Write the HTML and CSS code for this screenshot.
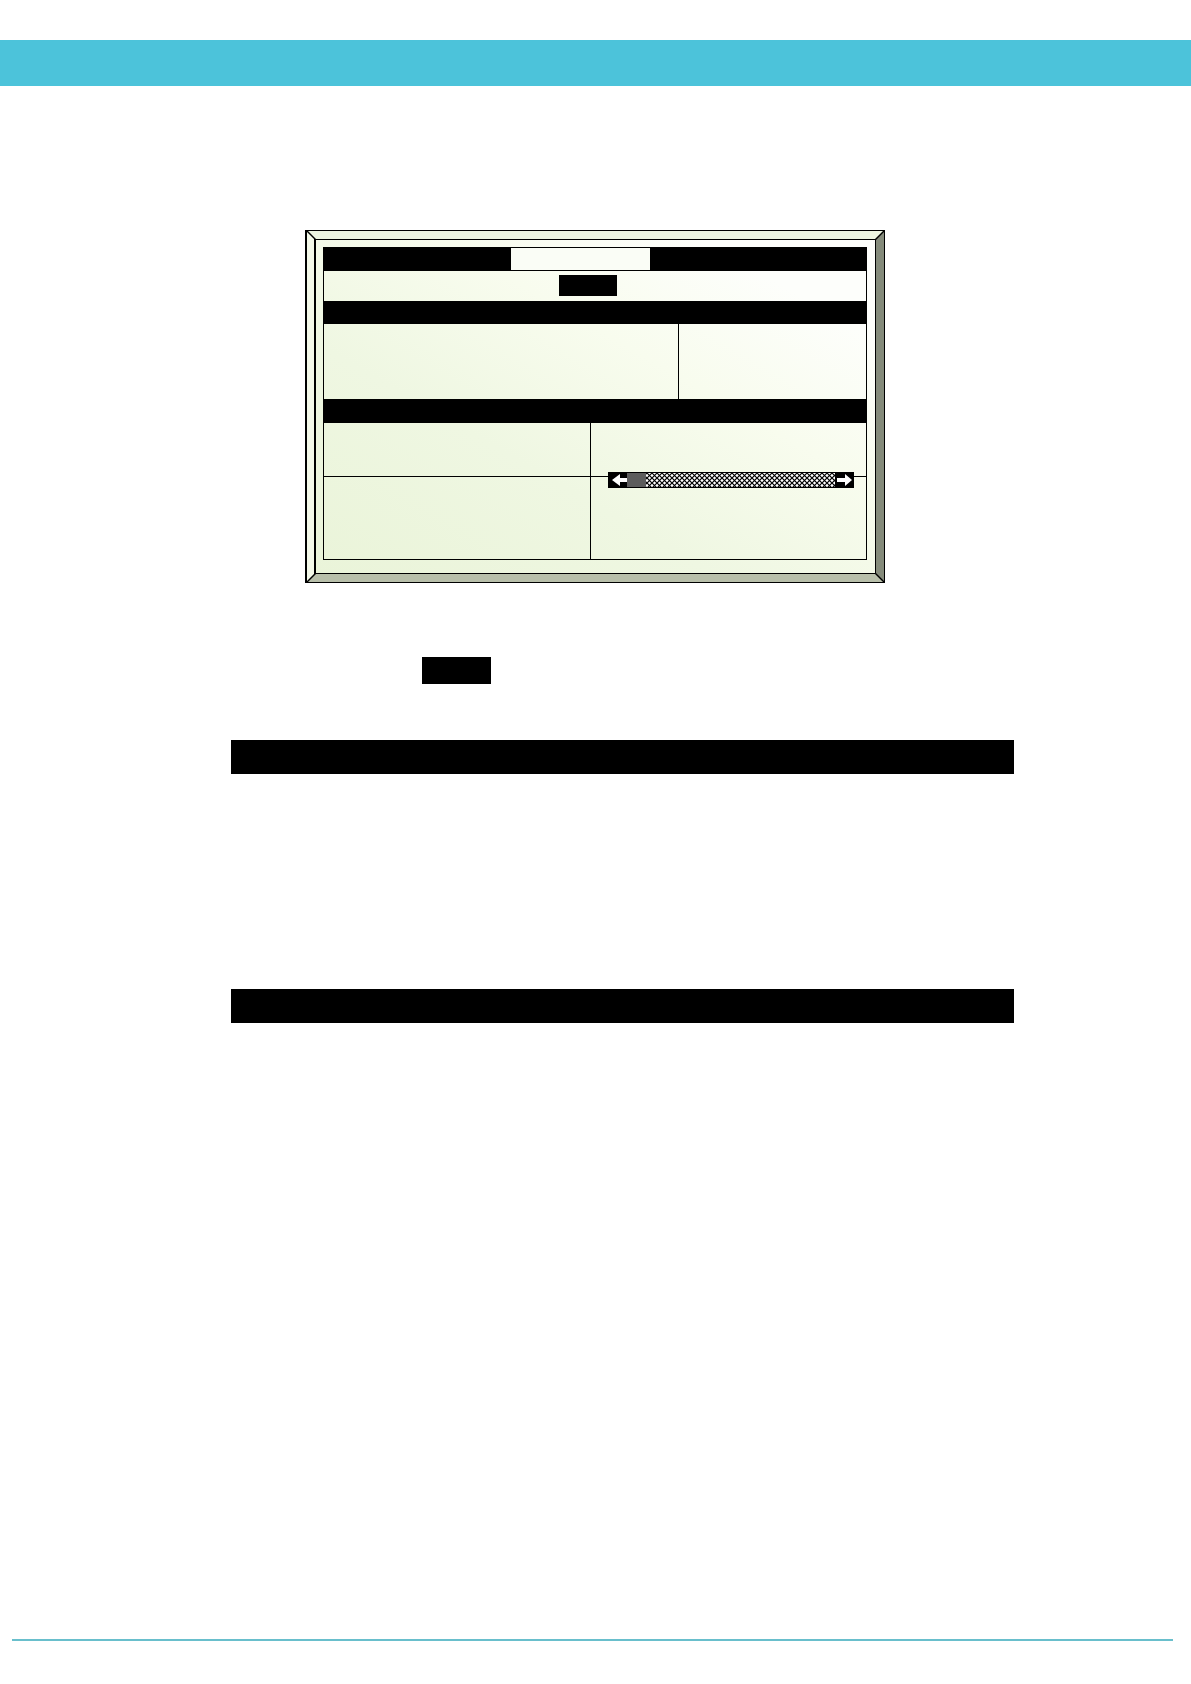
FILE: index.html
```html
<!DOCTYPE html>
<html lang="en">
<head>
<meta charset="utf-8">
<meta name="viewport" content="width=device-width, initial-scale=1">
<title>Display panel</title>
<link rel="stylesheet" href="styles.css">
</head>
<body>
<header class="band"></header>
<main>
  <section class="device">
    <svg class="corner top left" viewBox="0 0 10 10"><path d="M0 0L10 10"/></svg>
    <svg class="corner top right" viewBox="0 0 10 10"><path d="M10 0L0 10"/></svg>
    <svg class="corner bottom left" viewBox="0 0 10 10"><path d="M0 10L10 0"/></svg>
    <svg class="corner bottom right" viewBox="0 0 10 10"><path d="M0 0L10 10"/></svg>
    <div class="bevel">
      <div class="face">
        <div class="screen">
          <div class="tabs"><span class="tab"></span></div>
          <div class="status"><span class="chip"></span></div>
          <div class="bar"></div>
          <div class="cells upper"><div></div><div></div></div>
          <div class="bar"></div>
          <div class="cells middle"><div></div><div></div></div>
          <div class="cells lower"><div></div><div></div></div>
          <div class="scroller">
            <button class="arrow" type="button" aria-label="Left"><svg viewBox="0 0 19 14"><path d="M4 7L12 1V5H19V9H12V13Z"/></svg></button>
            <input class="track" type="range" min="0" max="100" value="0" aria-label="Position">
            <button class="arrow" type="button" aria-label="Right"><svg viewBox="0 0 19 14"><path d="M17 7L10 1V5H2V9H10V13Z"/></svg></button>
          </div>
        </div>
      </div>
    </div>
  </section>
  <section class="content">
    <div class="label"></div>
    <div class="heading"></div>
    <div class="heading"></div>
  </section>
</main>
<footer></footer>
</body>
</html>
```
FILE: styles.css
```css
* { box-sizing: border-box; }

body {
  margin: 0;
  min-height: 100vh;
  display: flex;
  flex-direction: column;
  background: #fff;
  font-family: "Liberation Sans", sans-serif;
}

.band {
  height: 46px;
  margin-top: 40px;
  background: #4cc3da;
}

main {
  flex: 1;
  padding-right: 1px;
}

.device {
  position: relative;
  max-width: 580px;
  margin: 144px auto 0;
  border: 1px solid #000;
  border-left-width: 2px;
}

.bevel {
  border-style: solid;
  border-width: 8px 8px 8px 7px;
  border-color: #edf5e1 #858b7b #b8bfaa #f4f9e9;
}

.face {
  border: 1px solid #000;
  border-left-width: 2px;
  padding: 7px 8px 13px 7px;
  background: linear-gradient(30deg, #eaf4d9 0%, #eff7e2 35%, #f8fcee 62%, #fdfefb 85%);
}

.corner {
  position: absolute;
  width: 10px;
  height: 10px;
  stroke: #000;
  stroke-width: 1.4;
}
.top { top: -1px; }
.bottom { bottom: -1px; }
.left { left: -1px; }
.right { right: -1px; }

.screen {
  position: relative;
  border: 1px solid #000;
  border-top: 0;
}

.tabs {
  height: 24px;
  display: flex;
  justify-content: center;
  padding: 1px 29px 1px 0;
  background: #000;
}
.tab {
  width: 139px;
  background: #fafdf6;
}

.status {
  height: 30px;
  display: flex;
  justify-content: center;
  padding: 4px 14px 5px 0;
}
.chip {
  width: 58px;
  background: #000;
}

.bar {
  height: 23px;
  background: #000;
}
.upper + .bar { height: 24px; }

.cells { display: grid; }
.cells > :first-child { border-right: 1px solid #000; }
.upper {
  height: 75px;
  grid-template-columns: 355fr 187fr;
}
.middle, .lower { grid-template-columns: 267fr 275fr; }
.middle {
  height: 54px;
  border-bottom: 1px solid #000;
}
.lower { height: 82px; }

/* The scroll control lies over the rule between the two lower rows. */
.scroller {
  position: absolute;
  right: 12px;
  bottom: 71px;
  width: 246px;
  height: 16px;
  display: flex;
  padding: 1px 0;
  background: #000;
}
.arrow {
  width: 19px;
  padding: 0;
  border: 0;
  background: #000;
}
.arrow svg {
  display: block;
  width: 19px;
  height: 14px;
  fill: #fff;
}
.track {
  flex: 1;
  min-width: 0;
  height: 14px;
  margin: 0;
  appearance: none;
  background: #fff url("data:image/svg+xml,%3Csvg xmlns='http://www.w3.org/2000/svg' width='5' height='5'%3E%3Cpath d='M-1 -1L6 6M6 -1L-1 6' stroke='%23000' stroke-width='1.2'/%3E%3C/svg%3E");
}
.track::-webkit-slider-thumb {
  appearance: none;
  width: 19px;
  height: 14px;
  background: #5c5c5c;
}

.content { padding: 74px 176px 0 231px; }
.label {
  width: 69px;
  height: 27px;
  margin: 0 0 56px 191px;
  background: #000;
}
.heading {
  height: 34px;
  margin-bottom: 215px;
  background: #000;
}

footer {
  height: 45px;
  margin: 0 18px 0 12px;
  border-top: 2px solid #69bfcc;
}
```
